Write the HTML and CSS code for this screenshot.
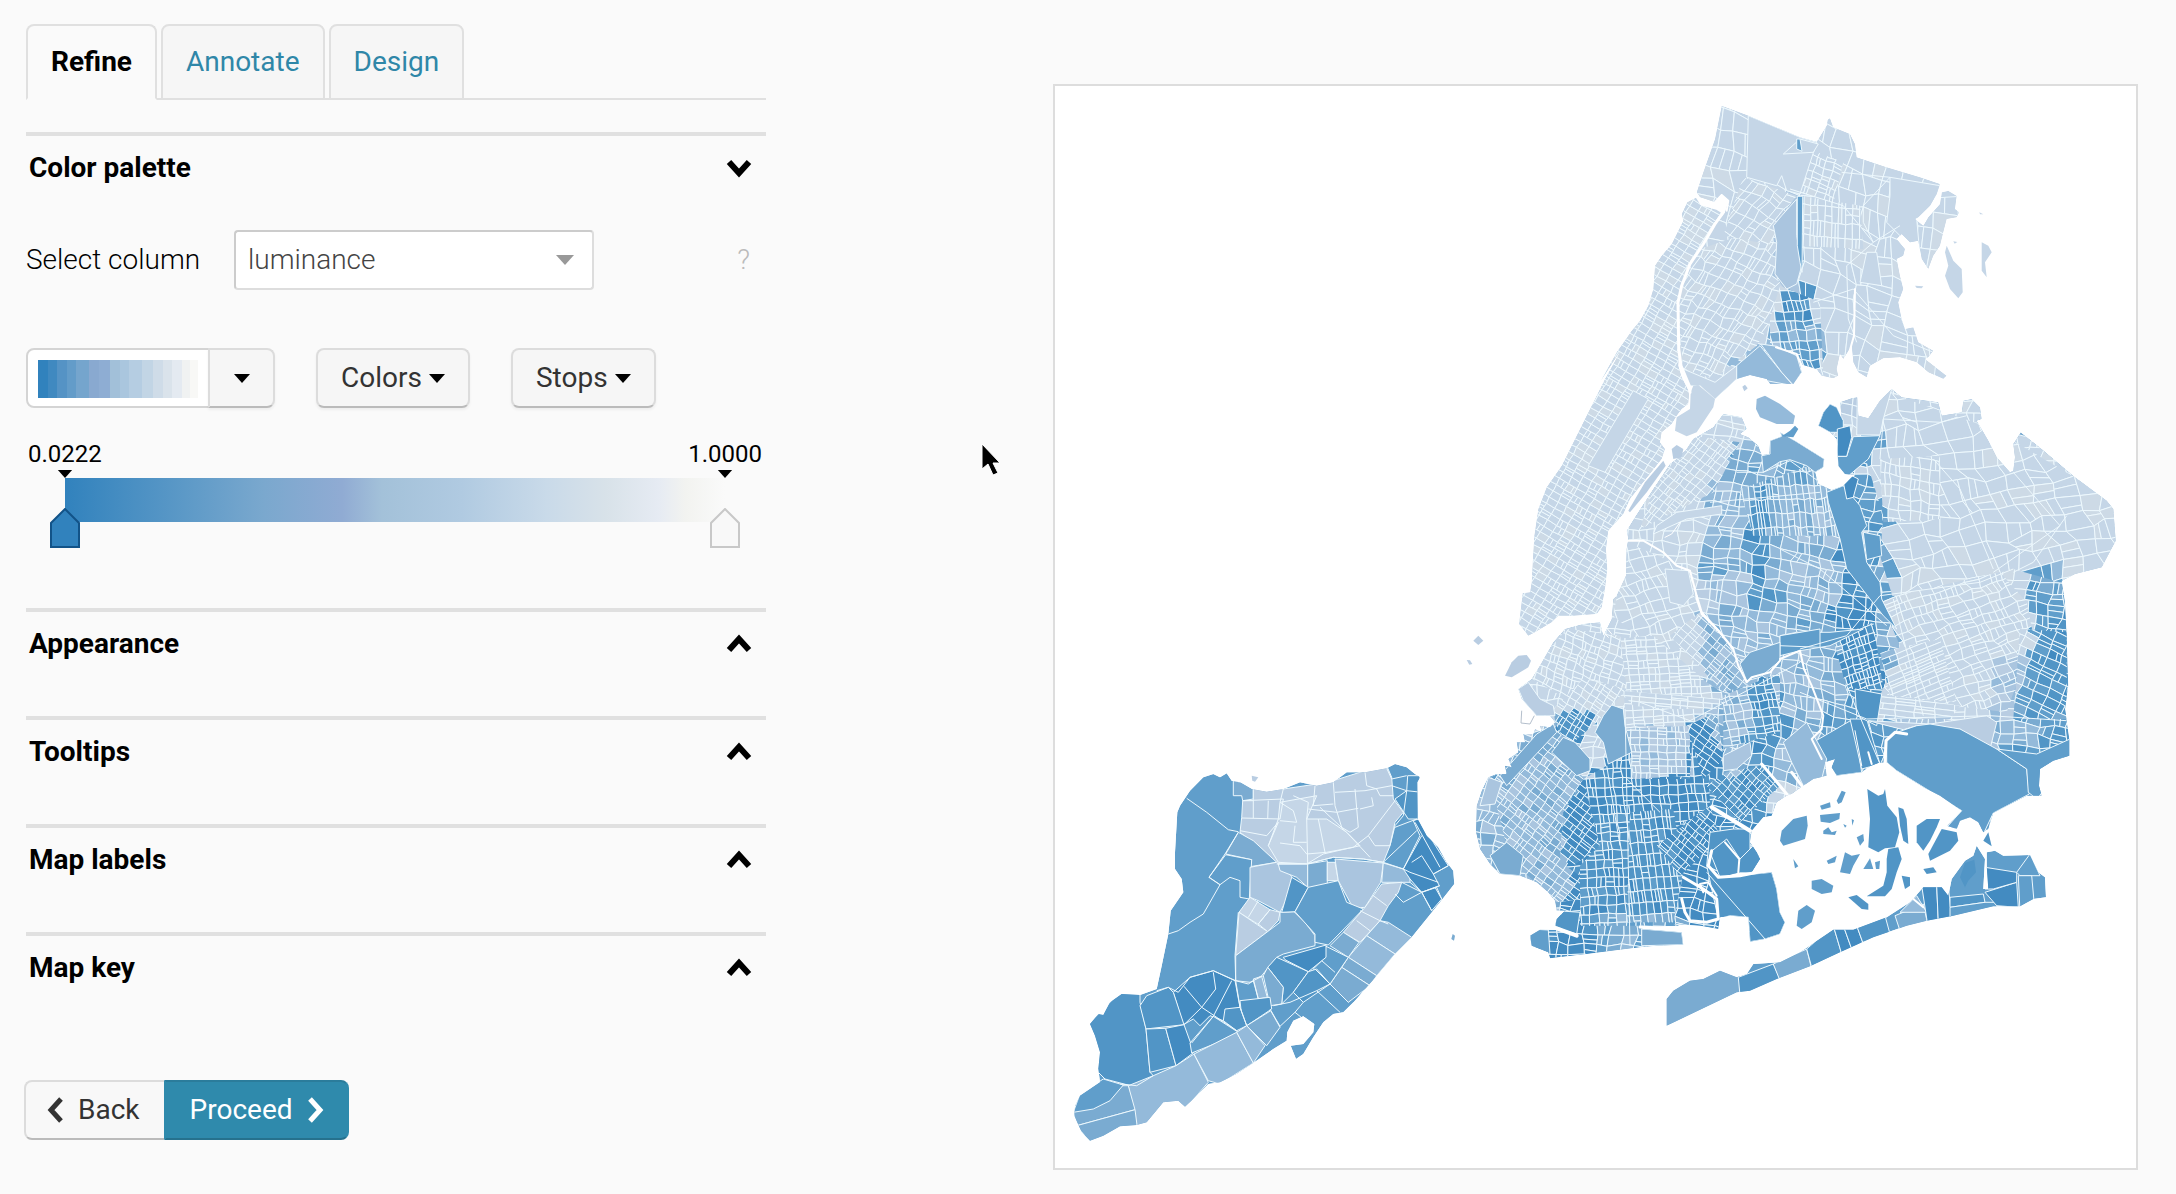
FILE: index.html
```html
<!DOCTYPE html>
<html lang="en">
<head>
<meta charset="utf-8">
<title>Refine map</title>
<link rel="stylesheet" href="styles.css">
</head>
<body>
<svg class="defs" width="0" height="0" aria-hidden="true">
  <symbol id="chevron" viewBox="0 0 26 26"><path d="M3 19 13 8l10 11" fill="none" stroke="currentColor" stroke-width="6"/></symbol>
  <symbol id="caret" viewBox="0 0 16 9"><path d="M0 0h16L8 9z" fill="currentColor"/></symbol>
</svg>
<main class="layout">
  <section class="panel">
    <nav class="tabs">
      <a class="tab tab-active" href="#refine">Refine</a>
      <a class="tab" href="#annotate">Annotate</a>
      <a class="tab" href="#design">Design</a>
    </nav>

    <section class="group group-open">
      <h2 class="group-head"><button class="group-toggle" type="button">Color palette<svg class="chevron chevron-down"><use href="#chevron"/></svg></button></h2>
      <div class="column-row">
        <label class="column-label" for="column">Select column</label>
        <select class="column-select" id="column"><option>luminance</option></select>
        <span class="help">?</span>
      </div>
      <div class="palette-row">
        <div class="palette-picker">
          <button class="palette-swatch" type="button" aria-label="Palette"><span class="swatch-fill"></span></button>
          <button class="palette-more" type="button" aria-label="More palettes"><svg class="caret"><use href="#caret"/></svg></button>
        </div>
        <button class="button" type="button">Colors<svg class="caret"><use href="#caret"/></svg></button>
        <button class="button" type="button">Stops<svg class="caret"><use href="#caret"/></svg></button>
      </div>
      <div class="scale">
        <div class="scale-ends">
          <label class="scale-end" for="stop-min">0.0222<svg class="tick"><use href="#caret"/></svg></label>
          <label class="scale-end" for="stop-max">1.0000<svg class="tick"><use href="#caret"/></svg></label>
        </div>
        <div class="scale-track">
          <div class="scale-bar"></div>
          <input class="stop stop-min" id="stop-min" type="range" min="0.0222" max="1" step="any" value="0.0222">
          <input class="stop stop-max" id="stop-max" type="range" min="0.0222" max="1" step="any" value="1">
        </div>
      </div>
    </section>

    <section class="group"><h2 class="group-head"><button class="group-toggle" type="button">Appearance<svg class="chevron"><use href="#chevron"/></svg></button></h2></section>
    <section class="group"><h2 class="group-head"><button class="group-toggle" type="button">Tooltips<svg class="chevron"><use href="#chevron"/></svg></button></h2></section>
    <section class="group"><h2 class="group-head"><button class="group-toggle" type="button">Map labels<svg class="chevron"><use href="#chevron"/></svg></button></h2></section>
    <section class="group"><h2 class="group-head"><button class="group-toggle" type="button">Map key<svg class="chevron"><use href="#chevron"/></svg></button></h2></section>

    <div class="steps">
      <button class="step step-back" type="button"><svg class="arrow" viewBox="0 0 18 26"><path d="M15 2 5 13l10 11" fill="none" stroke="currentColor" stroke-width="5"/></svg>Back</button>
      <button class="step step-next" type="button">Proceed<svg class="arrow" viewBox="0 0 18 26"><path d="M3 2l10 11L3 24" fill="none" stroke="currentColor" stroke-width="5"/></svg></button>
    </div>
  </section>

  <section class="preview">
    <svg class="map" id="map" viewBox="1055 87 1081 1082" role="img" aria-label="Census tracts of New York City shaded by luminance"></svg>
  </section>
</main>
<svg class="pointer" viewBox="0 0 20 34" aria-hidden="true"><path d="M1 1v25l6-5 5 11 5-2-5-10h7z" fill="#000" stroke="#fff" stroke-width="1"/></svg>
<script src="map.js"></script>
</body>
</html>
```
FILE: styles.css
```css
* { box-sizing: border-box; }
body { margin: 0; background: #fafafa; color: #000; font: 28px/36px Roboto, sans-serif; }
button, select, input { font: inherit; color: inherit; margin: 0; }
.defs { position: absolute; }

.layout { display: grid; grid-template-columns: 740fr 1085fr; column-gap: 287px; padding: 24px 38px 24px 26px; align-items: start; }

.tabs { display: flex; gap: 4px; height: 76px; border-bottom: 2px solid #e0e0e0; }
.tab { display: flex; align-items: center; height: 76px; padding: 0 23px; border: 2px solid #e0e0e0; border-radius: 8px 8px 0 0; background: #f6f6f6; color: #2f87a8; text-decoration: none; }
.tab-active { background: #fafafa; border-bottom-color: #fafafa; color: #000; font-weight: 700; }

.group { height: 108px; border-top: 4px solid #e0e0e0; }
.group-open { height: auto; margin-top: 32px; padding-bottom: 60px; }
.group-head { margin: 0; font-size: 28px; }
.group-toggle { display: flex; align-items: center; justify-content: space-between; width: 100%; height: 64px; padding: 0 14px 0 3px; border: 0; background: none; font-weight: 700; text-align: left; cursor: pointer; }
.chevron { width: 26px; height: 26px; }
.chevron-down { transform: rotate(180deg); }

.column-row { display: flex; align-items: center; margin-top: 30px; font-weight: 300; }
.column-label { width: 208px; }
.column-select { width: 360px; height: 60px; padding: 0 12px; border: 2px solid #ccc; border-right-color: #ddd; border-bottom-color: #ddd; border-radius: 4px; color: #444; appearance: none; background: #fff url("data:image/svg+xml,%3Csvg xmlns='http://www.w3.org/2000/svg' width='18' height='10'%3E%3Cpath d='M0 0h18L9 10z' fill='%23999'/%3E%3C/svg%3E") no-repeat right 18px center; }
.help { margin-left: auto; padding-right: 16px; color: #bbb; }

.palette-row { display: flex; gap: 41px; margin-top: 58px; }
.palette-picker { display: flex; width: 249px; height: 60px; }
.palette-swatch { width: 184px; padding: 10px; border: 2px solid #d4d4d4; border-radius: 8px 0 0 8px; background: #fff; }
.swatch-fill { display: block; height: 38px; background: linear-gradient(to right, #3182bd 6%, #4089c0 6% 12%, #5593c5 12% 18%, #639cc9 18% 24%, #75a5cd 24% 32%, #89a9d0 32% 38%, #8eadd3 38% 45%, #a2c0d9 45% 51%, #aac6de 51% 57%, #b5cde2 57% 65%, #c2d5e5 65% 72%, #cfdce8 72% 78%, #dae3eb 78% 84%, #e4eaf1 84% 90%, #f0f2f2 90% 95%, #f8f8f6 95%); }
.palette-more, .button { display: flex; align-items: center; justify-content: center; border: 2px solid #dcdcdc; border-bottom-color: #bbb; background: #f6f6f6; box-shadow: 0 2px 3px #0000000d; color: #333; }
.palette-more { flex: 1; margin-left: -2px; border-radius: 0 8px 8px 0; }
.button { height: 60px; padding: 0 23px; gap: 7px; border-radius: 8px; }
.caret { width: 16px; height: 9px; color: #000; }

.scale { margin-top: 32px; }
.scale-ends { display: flex; justify-content: space-between; padding-left: 2px; padding-right: 4px; font-size: 24px; line-height: 28px; }
.scale-end { display: flex; flex-direction: column; align-items: center; gap: 2px; }
.tick { width: 16px; height: 8px; }
.scale-track { position: relative; height: 70px; margin: 0 26px 0 24px; }
.scale-bar { height: 44px; margin: 0 15px; background: linear-gradient(to right, #3182bd, #5c99c7 18%, #7aa8ce 30%, #90abd3 42%, #a3c1d9 48%, #b0cae1 60%, #c9dae9 73%, #d8e2e9 82%, #e6ebf3 90%, #f2f3f0 94%, #fafafa); }
.stop { position: absolute; left: 0; top: 30px; width: 100%; height: 40px; appearance: none; background: none; pointer-events: none; }
.stop::-webkit-slider-thumb { appearance: none; width: 30px; height: 40px; border: 0; pointer-events: auto; }
.stop-min::-webkit-slider-thumb { background: url("data:image/svg+xml,%3Csvg xmlns='http://www.w3.org/2000/svg' width='30' height='40'%3E%3Cpath d='M1 39V15L15 1l14 14v24z' fill='%233182bd' stroke='%23125388' stroke-width='2'/%3E%3C/svg%3E"); }
.stop-max::-webkit-slider-thumb { background: url("data:image/svg+xml,%3Csvg xmlns='http://www.w3.org/2000/svg' width='30' height='40'%3E%3Cpath d='M1 39V15L15 1l14 14v24z' fill='%23f8f8f8' stroke='%23c8c8c8' stroke-width='2'/%3E%3C/svg%3E"); }

.steps { display: flex; margin: 40px 0 0 -2px; }
.step { display: flex; align-items: center; gap: 14px; height: 60px; padding: 0 24px; border: 2px solid #dcdcdc; }
.step-back { padding-left: 20px; border-right: 0; border-bottom-color: #bbb; border-radius: 8px 0 0 8px; background: #f8f8f8; color: #333; }
.step-next { padding-right: 22px; border-color: #2b7c9b #2f8aac #26718d; border-radius: 0 8px 8px 0; background: #2f8aac; color: #fff; }
.arrow { width: 18px; height: 26px; }

.preview { margin-top: 60px; border: 2px solid #ddd; background: #fff; }
.map { display: block; width: 100%; height: auto; }
.map path { stroke: #edf8fd; stroke-width: 1; stroke-linejoin: round; }
.map .bare { stroke: none; }
.map .line { fill: none; }
.map .water { fill: none; stroke: #fff; stroke-linecap: round; }

.pointer { position: absolute; left: 981px; top: 443px; width: 20px; height: 34px; }
```
FILE: map.js
```javascript
// Survey sheets: every sheet has its own origin and three units per map unit.
// A point list starts with the sheet's letter and may change sheet half way.
const sheets = { A: [1040, 740], B: [1440, 600], C: [1640, 660], D: [1480, 350], E: [1780, 370], F: [1600, 90] };
const shade = { d1: '#438bc1', d2: '#5195c6', d3: '#609ecb', m1: '#7aabd1', m2: '#94bada', m3: '#aac5df', l1: '#b9cde2', l2: '#c5d6e7', l3: '#cddae6' };
const ramp = Object.keys(shade);
const svg = document.getElementById('map');
const NS = 'http://www.w3.org/2000/svg';

let seed = 11;
const rnd = () => { seed = (seed * 16807) % 2147483647; return seed / 2147483647; };

function points(text) {
  let o;
  const out = [];
  for (const t of text.trim().split(/\s+/)) {
    if (sheets[t]) o = sheets[t];
    else { const [x, y] = t.split(',').map(Number); out.push([o[0] + x / 3, o[1] + y / 3]); }
  }
  return out;
}
const toPath = (pts, close = true) => 'M' + pts.map(p => p[0].toFixed(1) + ' ' + p[1].toFixed(1)).join('L') + (close ? 'Z' : '');
function add(name, attrs, parent = svg) {
  const el = document.createElementNS(NS, name);
  for (const k in attrs) el.setAttribute(k, attrs[k]);
  parent.appendChild(el);
  return el;
}
function inside([x, y], poly) {
  let hit = false;
  for (let i = 0, j = poly.length - 1; i < poly.length; j = i++) {
    const [xi, yi] = poly[i], [xj, yj] = poly[j];
    if ((yi > y) !== (yj > y) && x < (xj - xi) * (y - yi) / (yj - yi) + xi) hit = !hit;
  }
  return hit;
}
let clips = 0;
function clipTo(d, parent) {
  const id = 'clip' + clips++;
  add('path', { d }, add('clipPath', { id }));
  return add('g', { 'clip-path': `url(#${id})` }, parent);
}

const manhattan = 'F 290,325 262,340 245,375 250,395 230,435 215,465 185,500 165,530 160,600 145,650 120,695 95,725 50,790 0,880 D 425,0 375,90 315,210 245,350 200,415 175,480 163,560 158,640 155,700 150,730 128,732 117,825 145,860 165,850 215,820 235,800 280,800 350,795 365,775 375,720 382,660 378,600 385,545 430,495 450,450 545,330 555,300 540,280 545,250 575,225 590,200 605,180 625,165 628,130 605,85 595,50 598,0 F 235,780 232,640 245,590 265,530 300,480 320,440 350,400 365,370 350,360 310,350';
const bronx = 'F 365,50 440,78 600,145 650,158 680,110 683,92 690,88 700,115 750,135 765,165 770,205 860,235 960,265 1020,285 1010,315 990,350 955,385 945,390 970,410 985,385 1020,345 1025,310 1045,305 1070,320 1065,360 1078,370 1070,385 1040,390 1030,430 1020,470 1000,500 985,540 965,510 955,455 930,460 905,435 890,450 915,480 910,500 890,510 900,560 910,600 895,640 905,690 915,720 940,715 955,760 1000,785 985,805 975,810 1040,860 1030,870 985,850 950,820 900,805 850,808 810,830 800,865 775,850 760,820 755,770 730,810 720,795 710,840 715,860 700,868 665,860 650,840 600,825 605,850 580,885 510,885 500,870 450,858 410,870 345,930 300,890 265,890 240,830 235,780 232,640 265,530 320,440 375,370 385,335 365,315 345,340 300,325 290,310 310,250 345,150';
const longIsland = 'D 730,195 785,205 800,240 780,255 805,265 835,290 845,318 868,315 870,275 905,262 E 0,190 45,215 133,270 130,295 105,310 115,345 155,363 190,350 215,325 225,318 195,315 175,290 170,210 150,190 115,170 130,130 150,105 170,115 185,150 180,100 215,88 232,85 235,140 265,148 300,95 335,60 365,85 475,100 485,140 545,130 550,95 575,90 600,115 605,150 590,155 625,215 650,265 690,310 700,305 705,265 700,225 722,190 785,240 885,325 980,395 1000,420 1007,515 965,595 885,615 845,635 855,700 860,800 863,900 865,950 855,1020 868,1110 C 1288,290 1240,305 1200,330 1197,380 1205,410 1160,410 1060,462 1045,510 1030,520 1015,490 990,475 960,485 950,510 920,500 965,455 900,410 850,385 770,335 740,310 715,312 690,322 665,340 590,350 575,325 585,300 555,310 560,350 520,360 490,380 455,405 440,410 410,430 395,470 370,475 335,515 330,550 350,580 360,600 335,640 300,640 240,655 395,640 410,690 420,760 435,790 420,825 375,840 330,848 325,775 270,770 240,775 235,810 180,800 100,795 B 720,980 600,983 610,990 725,1000 730,1037 650,1040 600,1045 440,1065 330,1078 325,1060 275,1040 270,1010 300,992 355,993 410,1012 395,1000 345,980 350,960 375,935 350,935 345,905 325,880 290,850 240,830 180,825 150,795 120,750 108,700 110,620 125,575 145,535 170,525 200,525 195,500 215,505 205,480 235,460 230,430 255,430 250,405 280,405 285,390 305,400 300,380 330,385 345,370 330,350 290,350 245,300 235,270 275,240 300,200 340,130 375,90 430,75 480,70 490,110 500,90 515,60 520,0 D 410,740 438,680 440,600 445,570 440,545 465,505 520,420 570,345 590,330 620,300 640,270 700,235';
const rockaway = 'C 1040,620 1040,580 1065,575 1090,590 1170,588 1195,640 1215,655 1218,715 1180,720 1140,742 1060,742 940,770 860,785 800,800 700,835 600,880 510,922 410,960 330,995 290,1000 80,1100 80,1020 100,995 150,965 190,960 240,935 290,955 320,945 340,915 420,910 480,880 580,812 640,812 740,775 810,730 850,685 905,685 925,710 935,660 975,605 1000,590 1010,560 1035,600 1030,690 1045,690';

// Later tones lie over earlier ones.
const tones = [
  ['m1', 'D 770,270 1020,330 1100,500 1100,950 760,900 700,850 650,700 690,560 730,390'],
  ['m3', 'D 650,690 800,660 790,900 700,850'],
  ['m1', 'E 0,190 150,370 180,510 300,700 360,830 300,980 0,1000'],
  ['m2', 'D 900,400 1060,400 1120,800 920,800'],
  ['m2', 'D 680,400 810,400 800,640 690,640'],
  ['m2', 'E 0,830 170,830 170,980 90,1200 0,1200'],
  ['d2', 'D 825,415 860,415 870,700 900,780 880,900 810,900 825,700 815,560'],
  ['d1', 'E 150,500 190,520 240,650 300,720 290,820 310,960 200,960 170,800 130,720 210,680'],
  ['d3', 'E 190,340 270,320 320,440 300,560 340,690 300,690 260,580 240,480'],
  ['d3', 'E 170,200 320,200 260,280 200,325'],
  ['l1', 'E 170,80 240,80 240,150 180,150'],
  ['m3', 'E 640,880 760,840 700,1060 640,1060'],
  ['d3', 'E 720,650 780,590 850,610 900,700 880,1200 760,1200 690,1060 735,880 770,760'],
  ['d2', 'E 770,760 880,720 880,1040 780,1050 760,900'],
  ['m2', 'E 810,560 880,570 870,640 820,640'],
  ['m3', 'C 690,180 1050,170 1100,270 1050,270 870,195 760,205'],
  ['m2', 'C 1050,170 1190,190 1190,290 1070,270'],
  ['m2', 'B 780,50 900,20 1020,0 1100,200 1020,260 1020,480 850,520 760,370 850,290 790,260'],
  ['d2', 'B 930,250 1010,230 1010,380 940,370'],
  ['m2', 'B 100,530 250,400 400,400 430,530 400,640 400,800 420,830 420,950 340,960 100,830'],
  ['m1', 'B 130,530 350,350 390,420 340,460 180,540'],
  ['d2', 'B 350,360 400,320 470,355 410,430 350,400'],
  ['d1', 'B 370,640 430,540 580,450 580,530 750,530 750,400 740,380 790,350 840,440 850,520 920,540 1000,640 1020,1200 260,1100 350,920 400,880 370,740'],
  ['d2', 'B 480,640 700,620 730,830 700,980 420,980 400,800 470,740'],
  ['m1', 'B 470,930 740,950 740,1050 470,1060'],
  ['m3', 'B 560,385 750,380 750,530 580,540'],
  ['d2', 'C 330,200 470,160 440,330 370,480 290,480 200,400'],
  ['m2', 'C 230,330 310,250 340,300 280,360'],
  ['m2', 'C 430,230 500,180 560,240 545,370 470,400 400,340'],
  ['d3', 'C 540,130 720,100 690,180 850,200 800,320 590,360 520,250'],
  ['d2', 'C 620,80 730,90 700,180 720,320 660,320 640,180'],
  ['d3', 'C 1080,270 1290,230 1290,300 1190,420 1030,530'],
  ['m3', 'F 540,370 590,330 605,530 560,600 525,555'],
  ['d2', 'F 590,320 608,320 605,550 630,600 650,700 665,720 540,730 510,700 550,640 555,600 590,580'],
  ['m1', 'F 515,715 670,700 670,790 520,770'],
  ['d3', 'F 530,760 630,740 675,860 600,825'],
  ['m2', 'F 470,775 530,770 600,825 605,850 580,890 500,870 410,880 400,820'],
].map(([t, p]) => [ramp.indexOf(t), points(p)]);

function toneAt(p) {
  let t = ramp.indexOf('l2');
  for (const [v, poly] of tones) if (inside(p, poly)) t = v;
  const r = rnd();
  if (r < 0.17) t -= t > 6 ? 0 : 1;
  if (r > 0.8) t += 1;
  return shade[ramp[Math.max(0, Math.min(8, t))]];
}

// Tracts: a bent grid, some of its cells split in two.
function mesh(outline, turn, w, h, bend, parent) {
  const poly = points(outline);
  const xs = poly.map(p => p[0]), ys = poly.map(p => p[1]);
  const cx = (Math.min(...xs) + Math.max(...xs)) / 2, cy = (Math.min(...ys) + Math.max(...ys)) / 2;
  const r = Math.hypot(Math.max(...xs) - cx, Math.max(...ys) - cy) + 20;
  const c = Math.cos(turn * Math.PI / 180), s = Math.sin(turn * Math.PI / 180);
  const nx = Math.ceil(r / w), ny = Math.ceil(r / h);
  const g = clipTo(toPath(poly), parent);
  const grid = [];
  for (let j = -ny; j <= ny; j++) {
    const row = [];
    for (let i = -nx; i <= nx; i++) {
      const u = i * w + (rnd() - 0.5) * w * bend + Math.sin(j / 5) * w * bend, v = j * h + (rnd() - 0.5) * h * bend + Math.sin(i / 4) * h * bend;
      row.push([cx + u * c - v * s, cy + u * s + v * c]);
    }
    grid.push(row);
  }
  const mix = (a, b, t) => [a[0] + (b[0] - a[0]) * t, a[1] + (b[1] - a[1]) * t];
  const put = q => {
    const m = mix(mix(q[0], q[1], 0.5), mix(q[2], q[3], 0.5), 0.5);
    if (Math.abs(m[0] - cx) < r && Math.abs(m[1] - cy) < r) add('path', { d: toPath(q), fill: toneAt(m) }, g);
  };
  for (let j = 0; j < 2 * ny; j++) for (let i = 0; i < 2 * nx; i++) {
    const [a, b, d, e] = [grid[j][i], grid[j][i + 1], grid[j + 1][i + 1], grid[j + 1][i]];
    if (!inside(a, poly) && !inside(b, poly) && !inside(d, poly) && !inside(e, poly)) continue;
    const k = rnd(), t = 0.35 + rnd() * 0.3;
    if (k < 0.2) { put([a, mix(a, b, t), mix(e, d, t), e]); put([mix(a, b, t), b, d, mix(e, d, t)]); }
    else if (k < 0.36) { put([a, b, mix(b, d, t), mix(a, e, t)]); put([mix(a, e, t), mix(b, d, t), d, e]); }
    else put([a, b, d, e]);
  }
}

function land(outline, base, zones) {
  const d = toPath(points(outline));
  const g = clipTo(d, svg);
  add('path', { d, fill: shade[base], class: 'bare' }, g);
  for (const z of zones) mesh(...z, g);
  return g;
}
const fill = (tone, outline, parent, cls = '') => add('path', { d: toPath(points(outline)), fill: shade[tone], class: cls }, parent);
const water = (line, width) => add('path', { d: toPath(points(line), false), class: 'water', style: `stroke-width:${width}` });

const mh = land(manhattan, 'l2', [[manhattan, -59, 7, 10, 0.12]]);
fill('l2', 'D 460,125 505,150 375,370 325,350', mh);

const bx = land(bronx, 'l2', [
  [bronx, 12, 19, 18, 0.6],
  ['F 600,320 780,350 790,480 600,470', 2, 7, 15, 0.15],
  ['F 225,460 300,480 420,440 530,460 525,560 560,610 500,720 470,770 340,870 250,840 230,640', -62, 11, 9, 0.4],
  ['F 625,180 730,220 700,340 600,310', 20, 9, 8, 0.2],
  ['F 430,265 590,320 520,410 530,470 370,440 400,350', -55, 12, 9, 0.4],
  ['F 540,590 660,640 670,860 510,780 510,690', -8, 9, 10, 0.3],
]);
fill('l2', 'F 445,80 600,145 650,160 600,315 560,305 545,260 530,290 440,265', bx);
fill('l2', 'F 550,195 600,150 655,165 640,190', bx);
fill('d3', 'F 590,150 600,150 606,187 590,180', bx);
fill('m3', 'F 590,330 590,440 605,530 590,585 560,600 525,555 530,460 520,410 545,380', bx);
fill('d3', 'F 592,322 608,322 606,550 600,520 592,470', bx);
fill('l2', 'F 870,265 1020,290 1010,340 950,390 960,500 900,440 860,400 870,320', bx);
fill('l2', 'F 800,490 830,490 845,590 780,580', bx);
fill('l2', 'F 250,840 345,880 410,830 410,870 345,930 300,890 265,890', bx);
fill('m2', 'F 410,830 480,770 545,850 580,890 500,875 410,880', bx);
fill('m2', 'F 482,765 530,772 590,800 605,850 580,888 545,850', bx);
for (const l of ['F 570,300 730,350 820,460', 'F 820,460 740,530 745,690 770,760', 'F 725,250 870,265 790,350 790,400 820,460 900,410', 'F 640,640 760,600 880,740 1000,790'])
  add('path', { d: toPath(points(l), false), class: 'line' }, bx);

const li = land(longIsland, 'm1', [
  [longIsland, 8, 13, 11, 0.45],
  ['E 290,60 640,180 1010,400 1010,600 840,640 700,600 480,660 340,690 300,560 310,440 260,280 280,150', -15, 20, 16, 0.55],
  ['E 300,270 480,260 480,450 310,460', 5, 10, 11, 0.35],
  ['E 300,690 660,610 740,700 760,800 680,1030 520,1010 300,980 360,830', -22, 12, 9, 0.4],
  ['E 300,850 480,810 530,1000 330,980', 68, 6, 16, 0.1],
  ['E 160,810 280,760 310,960 200,960', 72, 8, 7, 0.2],
  ['E 720,780 860,790 860,1050 700,1050', 24, 14, 9, 0.2],
  ['E 300,975 540,1010 510,1050 270,1050', 6, 20, 6, 0.1],
  ['D 640,260 780,280 700,430 480,540 520,420', -52, 8, 7, 0.15],
  ['D 780,420 1020,340 1090,560 820,560', -6, 6, 14, 0.2],
  ['D 440,580 600,650 660,780 760,900 520,900 400,800', -20, 12, 11, 0.4],
  ['B 520,120 640,110 800,250 860,290 750,380 560,380 550,270', -4, 10, 7, 0.15],
  ['B 690,110 780,40 900,180 920,260 850,280', 40, 9, 7, 0.1],
  ['B 260,230 380,90 540,110 560,270 450,240 380,300', 20, 9, 8, 0.35],
  ['B 340,330 430,240 560,270 470,370 400,430 350,400', 32, 8, 7, 0.15],
  ['B 150,540 350,380 430,540 370,640 360,790 420,830 420,900 350,910 210,780', 37, 9, 7, 0.15],
  ['B 370,640 430,540 480,560 480,740 400,800 360,780', 37, 12, 6, 0.1],
  ['B 430,540 500,500 580,450 580,540 750,540 760,380 800,360 810,620 640,730 640,980 420,980 420,800 480,740', -4, 9, 9, 0.2],
  ['B 570,640 700,630 730,820 700,970 560,970', -7, 7, 12, 0.12],
  ['B 650,740 810,620 840,720 720,830', 40, 10, 6, 0.15],
  ['B 560,390 750,380 750,530 580,540', 0, 9, 7, 0.15],
  ['B 740,380 830,340 850,480 790,540', 35, 11, 6, 0.2],
  ['B 800,560 860,520 960,500 1020,560 900,670', 42, 8, 7, 0.15],
  ['B 850,290 1020,220 1020,400 850,450', -10, 9, 8, 0.25],
  ['B 540,275 850,300 830,330 700,330 580,320', 5, 16, 5, 0.05],
]);
fill('d3', 'E 140,370 190,350 240,410 260,470 245,490 260,580 300,640 305,690 350,780 310,740 270,690 200,600 180,510 145,400', li);
fill('m1', 'E 0,190 45,215 133,270 130,295 105,310 80,290 30,272 0,278 D 850,370 845,320 870,315 870,275 905,262', li);
fill('d2', 'E 115,170 130,130 150,105 170,115 190,155 190,190 150,190', li);
fill('d3', 'E 220,203 300,200 265,270 200,325 175,300 172,262 200,262', li);
fill('d1', 'E 172,180 210,170 215,205 200,262 172,262', li);
fill('l2', 'E 232,90 335,60 310,150 300,198 230,198', li);
fill('d1', 'E 190,340 215,320 235,330 220,385 200,390', li);
fill('l2', 'D 530,530 590,490 725,470 725,495 620,510 520,555', li);
fill('l2', 'D 555,660 625,665 640,735 610,770 570,760', li);
fill('d3', 'E 250,490 300,500 305,560 260,572', li);
fill('d3', 'E 0,800 50,790 150,790 250,780 150,830 60,845 0,860', li);
fill('d3', 'D 900,860 1020,840 1020,895 900,890', li);
fill('m1', 'B 900,195 930,160 1020,130 1020,185 960,235 920,245', li);
fill('m1', 'B 490,350 515,318 550,330 555,380 575,460 505,495 490,430 465,400', li);
fill('m1', 'B 335,460 370,415 405,430 450,480 450,515 410,530', li);
fill('m3', 'B 850,470 930,430 935,470 890,510 850,515', li);
fill('m3', 'B 120,620 145,535 185,550 165,615', li);
fill('m1', 'B 150,770 200,730 250,770 240,830 180,825', li);
fill('l1', 'B 235,270 265,250 300,300 340,320 345,350 290,350 250,305', li);
fill('m1', 'B 180,530 290,405 340,375 350,400 200,560', li);
fill('d2', 'B 810,700 880,690 930,690 930,760 960,770 900,820 850,825 800,800', li);
fill('d2', 'B 345,985 350,935 420,940 410,1005', li);
fill('d3', 'B 270,990 325,993 330,1065 270,1050', li);
fill('m1', 'B 605,990 725,1000 730,1037 605,1040', li);
fill('d2', 'C 200,620 240,655 395,640 410,690 420,760 435,790 420,825 375,840 330,848 325,775 270,770 235,780', li);
fill('d2', 'C 210,580 260,540 300,600 340,560 370,600 335,645 240,655', li);
fill('d3', 'C 520,250 640,180 665,340 590,350 545,290', li);
fill('d2', 'C 630,180 680,180 720,315 665,330', li);
fill('d2', 'C 645,90 725,105 710,200 650,170', li);
fill('l1', 'C 685,185 870,195 1040,170 1070,190 1050,270 960,210 830,200 790,212', li);
fill('d3', 'C 740,245 765,222 830,200 870,195 960,210 1070,270 1160,330 1168,405 1060,462 1030,525 920,505 965,455 770,335 740,310', li);
fill('d3', 'C 1070,270 1190,285 1290,240 1290,300 1190,420 1165,400 1160,330', li);
fill('m2', 'C 430,250 500,190 560,300 545,360 490,380 455,310', li);
for (const l of ['C 0,130 150,185 330,90 480,10', 'C 480,100 680,180 1050,170 1280,185', 'C 620,80 720,315', 'C 200,640 375,840', 'E 0,540 120,600 320,770', 'E 60,840 200,800 300,680 600,640 700,600', 'E 300,270 310,150 480,160 560,140', 'E 460,270 540,360 640,600', 'E 340,690 430,1040', 'E 700,310 840,470 640,610', 'E 860,440 760,580 700,610', 'D 690,460 1020,430', 'D 770,370 850,370 930,335 1020,400', 'B 500,500 540,740', 'B 555,330 570,1040', 'B 560,540 660,640'])
  add('path', { d: toPath(points(l), false), class: 'line' }, li);

const rk = land(rockaway, 'd3', []);
fill('m1', 'C 60,900 300,940 300,1010 60,1110', rk);
fill('d2', 'C 295,955 400,915 420,960 300,1010', rk);
fill('m1', 'C 400,915 500,870 515,930 420,965', rk);
fill('d2', 'C 500,870 580,800 605,885 515,925', rk);
fill('d1', 'C 580,800 610,800 635,870 605,885', rk);
fill('d1', 'C 610,800 650,800 668,850 635,870', rk);
fill('d2', 'C 650,800 735,770 750,825 668,850', rk);
fill('m1', 'C 765,770 850,735 862,790 780,815', rk);
fill('m2', 'C 780,760 830,710 860,760', rk);
fill('d1', 'C 845,680 890,680 895,790 862,790', rk);
fill('d1', 'C 890,680 925,680 935,780 895,790', rk);
fill('d2', 'C 930,715 1030,705 1035,730 930,745', rk);
fill('d3', 'C 930,745 1035,730 1070,730 1070,760 930,780', rk);
fill('d1', 'C 1035,700 1130,670 1135,745 1070,740', rk);
fill('d1', 'C 1035,625 1130,640 1130,670 1060,690 1035,690', rk);
fill('d3', 'C 1130,640 1170,585 1200,650 1140,650', rk);
fill('d3', 'C 1135,650 1175,650 1185,760 1140,760', rk);

for (const [t, p] of [
  ['l2', 'D 640,110 655,108 705,150 700,175 650,250 620,262 585,245 590,205 630,180 632,130'],
  ['m2', 'D 830,150 855,140 900,165 945,200 940,225 890,225 840,205 828,180'],
  ['d3', 'D 905,262 930,245 945,230 955,240 940,265'],
  ['l1', 'D 550,335 557,350 500,430 450,490 445,485 495,400'],
  ['l1', 'D 575,300 590,288 610,300 605,325 580,330'],
  ['l1', 'D 787,113 795,107 803,118 793,127'],
  ['l2', 'F 1040,470 1060,515 1085,540 1088,610 1075,628 1050,600 1035,560 1045,530 1035,490'],
  ['l2', 'F 1145,460 1165,470 1175,490 1155,520 1160,565 1145,545'],
  ['l2', 'F 1138,370 1150,376 1140,376'], ['l2', 'F 945,590 970,592 965,598 950,597'], ['l2', 'F 1060,457 1072,459 1064,464'],
  ['l1', 'B 235,170 260,168 273,185 265,205 215,235 195,230 215,190'],
  ['l1', 'B 100,125 115,110 130,125 115,138'], ['l1', 'B 80,183 90,184 97,195 88,197'],
  ['m1', 'B 38,1005 45,1010 42,1025 34,1020'],
  ['d3', 'C 420,545 425,515 460,480 500,470 503,500 495,540 430,560'],
  ['d3', 'C 540,440 570,430 572,445 545,452'], ['d3', 'C 590,425 605,395 617,400 605,430 595,435'],
  ['d3', 'C 540,468 600,462 598,480 570,492 542,488'], ['d3', 'C 550,515 565,505 575,520 590,515 585,528 550,525'],
  ['d3', 'C 610,495 620,500 615,506'], ['d3', 'C 635,480 642,484 637,500'], ['d3', 'C 650,535 670,525 672,545 660,560'],
  ['d2', 'C 682,390 715,410 730,405 735,390 742,440 770,475 778,520 765,565 735,568 715,580 685,565 690,480'],
  ['d2', 'C 775,445 790,450 800,480 805,555 790,545 780,500'],
  ['d2', 'C 830,500 860,480 900,480 890,505 870,545 850,575 830,550'],
  ['d2', 'C 905,510 950,520 955,545 930,575 870,605 865,585'],
  ['d2', 'C 745,570 775,565 785,600 770,640 755,690 735,712 680,712 730,680 740,640 740,600'],
  ['d3', 'C 515,665 545,660 580,680 575,700 545,705 515,690'],
  ['d3', 'C 470,800 475,755 500,738 525,755 515,790 485,810'],
  ['d2', 'C 625,715 650,708 685,735 685,752 665,750'],
  ['d3', 'C 600,640 615,580 635,590 660,585 640,620 630,645'],
  ['d2', 'C 785,650 810,655 810,680 795,690'],
  ['d3', 'C 560,605 590,590 585,610 565,615'], ['d2', 'C 850,630 880,625 890,640 860,645'],
  ['d3', 'C 670,630 690,598 700,630'], ['d3', 'C 705,610 720,605 718,630 708,630'], ['d3', 'C 460,600 475,622 465,628'],
  ['d2', 'C 1030,545 1045,520 1055,562'],
  ['d2', 'C 960,655 975,612 1003,602 1008,640 985,665 975,685'],
]) fill(t, p, svg, 'bare');

water('F 292,325 305,345 350,358 370,370 345,405 310,465 270,525 245,590 234,640 236,780 243,830 268,890 D 630,130', 3);
water('F 345,340 365,318 385,335 380,365', 2);
water('F 528,775 590,795 605,830', 2);
water('F 765,600 762,740 745,800', 2);
water('D 440,575 490,575 550,610 590,650 630,665 650,740', 2);
water('D 650,740 665,790 720,850 760,900 B 895,200 920,250 935,235 990,220 1020,185', 2);
water('B 770,0 785,45 835,95 880,150', 2);
water('E 0,870 60,845 72,900 95,950 130,1040 125,1080 95,1110 125,1170', 2);
water('D 555,565 575,555 600,520', 1);
water('C 800,225 765,220 738,245 735,310', 3);
water('C 215,445 330,515', 4);
water('C 215,575 205,620 235,655 300,650 400,630', 3);
water('C 255,550 298,600 295,640', 2);
water('C 365,315 440,405', 3);
water('C 455,340 485,380', 3);
water('C 645,215 665,320', 1);
water('C 685,280 695,315', 2);
water('B 730,835 790,870 830,900 835,960 800,970 750,965 735,940 725,900', 3);
water('B 790,880 780,855 805,850 830,890', 2);
water('B 600,984 720,990 840,1000', 3);
water('B 350,988 410,1010', 4);
water('C 820,720 850,745', 2);
for (const l of ['B 490,75 515,105', 'B 482,90 505,115']) water(l, 1);
add('path', { d: toPath(points('B 245,335 243,372 270,375 283,350'), false), class: 'line', style: 'stroke:#b4bfcc' });

// Staten Island
const staten = 'A 150,855 175,825 190,828 210,790 245,765 300,768 350,750 365,680 385,585 392,515 430,460 425,420 405,390 405,340 412,220 420,200 450,155 490,115 520,105 540,115 560,103 575,125 600,130 635,150 680,158 730,150 780,130 830,140 880,130 920,100 975,100 1040,88 1065,75 1100,85 1125,105 1140,115 1132,130 1133,240 1160,290 1195,325 1220,370 1240,395 1243,435 1200,490 1115,595 1065,645 1010,710 980,745 945,785 910,820 880,825 850,850 820,895 790,945 768,960 752,920 790,915 820,880 823,855 790,832 760,845 742,880 740,905 700,930 640,972 590,1005 540,1030 505,1035 470,1070 435,1103 415,1085 370,1090 320,1150 290,1158 240,1162 190,1190 150,1205 125,1180 103,1130 105,1100 120,1070 180,1030 175,990 180,940 165,890';
const si = land(staten, 'd3', []);
for (const [t, p] of [
  ['m1', 'A 580,125 605,130 640,150 640,180 608,185 605,170 580,170'],
  ['l1', 'A 608,185 640,185 640,140 730,150 830,135 880,125 975,95 1040,80 1055,115 1060,180 1090,220 1065,250 1050,320 1030,370 970,360 880,355 800,375 710,375 690,360 640,310 600,280 605,235'],
  ['l2', 'A 720,190 830,170 800,240 860,240 920,280 960,320 850,345 800,375 715,370 685,320 715,240'],
  ['m1', 'A 595,280 640,305 710,370 630,383 635,362 557,345'],
  ['d3', 'A 557,347 635,362 628,480 600,475 600,425 570,415 540,437 507,415'],
  ['m3', 'A 630,385 710,370 755,412 750,460 720,520 655,485 630,475'],
  ['l2', 'A 630,475 690,512 685,575 597,520'], ['l1', 'A 690,512 720,520 715,545 683,578 655,555'],
  ['l1', 'A 597,520 683,578 587,650'],
  ['m1', 'A 587,650 720,550 720,520 762,518 795,550 825,590 825,620 730,645 710,655 665,710 625,735 587,725'],
  ['m2', 'A 715,375 803,375 803,445 770,415 720,395'], ['m1', 'A 803,375 862,365 862,435 840,450 803,445'],
  ['l2', 'A 862,370 885,370 895,425 862,425'],
  ['m3', 'A 885,360 1030,372 1022,430 975,505 940,508 895,425'],
  ['m2', 'A 1030,372 1090,390 1110,395 1110,430 1025,430'],
  ['d2', 'A 755,415 805,445 765,518 725,520'],
  ['d3', 'A 805,445 895,425 920,490 970,510 865,618 825,610 825,585 765,518'],
  ['l1', 'A 1025,435 1085,430 1075,460 1045,500 1020,545 960,610 910,580 975,505'],
  ['m2', 'A 1045,550 1115,595 1065,645 980,590 1020,545'], ['m2', 'A 980,590 1065,645 1010,710 925,655'],
  ['m1', 'A 925,655 1010,710 990,740 905,685'], ['m1', 'A 905,685 990,740 925,790 870,735'],
  ['m1', 'A 870,620 910,580 957,610 925,655'], ['d3', 'A 858,622 925,655 870,735 820,690 845,665'],
  ['d1', 'A 1120,245 1135,240 1225,380 1180,405 1198,440 1145,460 1110,420 1090,390 1140,290'],
  ['d1', 'A 1145,460 1190,445 1205,480 1175,515'],
  ['d2', 'A 1103,110 1140,110 1135,240 1105,240 1065,180 1100,155'],
  ['d1', 'A 730,655 858,618 858,655 805,698 735,662'], ['d2', 'A 683,685 710,655 805,698 760,760 725,795 730,745'],
  ['d2', 'A 805,698 830,690 870,735 790,790 760,760'],
  ['m1', 'A 670,710 683,685 730,745 725,795 690,800'], ['m2', 'A 640,720 665,712 682,775 655,780'],
  ['d1', 'A 400,760 450,715 520,695 585,725 600,805 550,845 510,830 480,860 460,840 430,857'],
  ['d2', 'A 600,785 690,775 695,810 620,860 605,830'], ['d2', 'A 555,810 600,805 620,860 590,875 550,845'],
  ['d2', 'A 300,790 300,760 240,760 145,855 175,1000 195,1020 290,1045 340,1010 330,1000 318,870'],
  ['d2', 'A 300,800 320,770 385,745 400,760 432,857 318,870'], ['d2', 'A 318,870 377,868 408,980 330,1000'],
  ['d1', 'A 377,868 432,857 462,940 408,980'], ['d3', 'A 520,832 595,880 530,912 455,942 450,912'],
  ['m2', 'A 340,1010 408,980 462,945 505,1030 435,1110 290,1165 265,1040'],
  ['m2', 'A 462,945 590,880 640,972 540,1035 505,1025'],
  ['m1', 'A 620,860 692,815 720,865 680,920'], ['m2', 'A 590,880 620,860 675,920 640,972'],
  ['m1', 'A 100,1120 245,1040 265,1040 285,1112 110,1160'], ['m1', 'A 110,1160 285,1112 292,1165 150,1210'],
  ['d3', 'A 100,1120 120,1065 190,1020 250,1038 210,1085 160,1110'],
]) fill(t, p, si);
for (const l of [
  'A 440,178 500,220 565,272 595,278', 'A 595,280 555,345 507,415 540,437 490,525 450,550 415,575 385,585',
  'A 595,520 585,650 587,725 600,805 620,860', 'A 350,755 385,745 415,760 450,715 520,695 587,725 630,730 670,710',
  'A 608,185 730,180 720,240 605,237', 'A 640,185 640,237', 'A 685,185 683,240', 'A 600,275 680,290 715,250 685,320', 'A 730,150 720,190 760,215 770,250 720,245',
  'A 760,170 805,190 800,240 803,375', 'A 825,140 820,200 880,195', 'A 880,130 885,200 905,265 930,280 955,265 945,150', 'A 840,205 920,280 990,355', 'A 805,210 890,220 955,208', 'A 835,240 855,340',
  'A 720,312 780,320 800,345 860,340 940,325 985,290 1065,185', 'A 885,160 975,155 1055,140', 'A 975,100 980,140 1010,150 1020,170 1060,170', 'A 995,175 1000,200 960,210', 'A 985,290 1005,320 1050,320', 'A 765,260 760,310 800,310',
  'A 710,375 800,375 880,355 970,360 1030,370 1090,390', 'A 1040,88 1055,120 1100,110', 'A 1055,140 1100,155 1145,160', 'A 1100,155 1090,230 1065,260 1050,320', 'A 1065,265 1130,240', 'A 1030,370 1130,275',
  'A 1125,250 1200,385', 'A 1145,290 1090,390 1110,400 1195,430', 'A 1115,370 1145,350 1180,405 1225,380', 'A 1110,430 1145,460 1175,515', 'A 1085,430 1145,460 1200,440', 'A 1065,465 1090,490 1145,460', 'A 1185,445 1205,480',
  'A 655,485 625,535', 'A 690,512 655,555', 'A 1000,470 1040,500', 'A 960,515 1020,545 1045,555', 'A 950,545 990,575', 'A 845,665 885,700', 'A 825,690 870,735', 'A 700,800 750,790 830,755 870,735', 'A 830,755 900,820', 'A 690,810 720,862 765,820 790,790', 'A 765,820 790,840', 'A 870,735 925,790', 'A 432,742 485,805 590,875', 'A 520,700 527,750 485,805 432,857', 'A 575,725 520,832 455,912', 'A 640,725 655,780', 'A 240,1035 290,1040 340,1010',
]) add('path', { d: toPath(points(l), false), class: 'line' }, si);
fill('l1', 'A 635,110 655,115 645,128 637,125', svg, 'bare');
```
